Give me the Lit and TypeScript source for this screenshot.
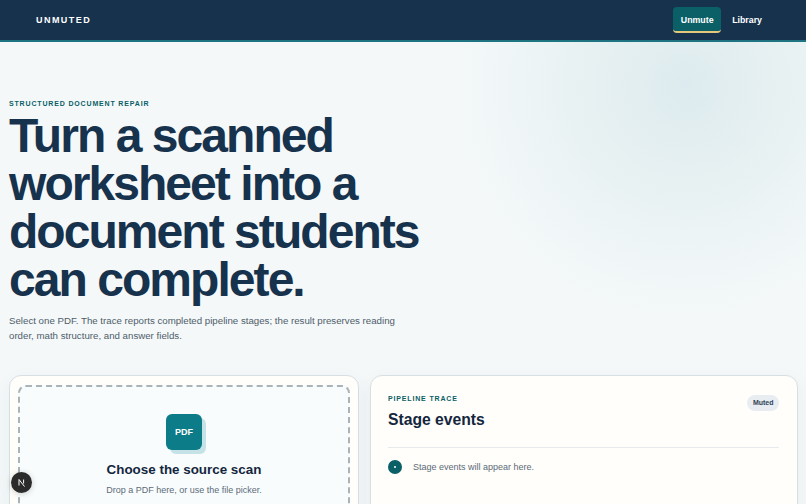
import { LitElement, html, css } from "lit";
import { customElement } from "lit/decorators.js";

@customElement("app-root")
export class AppRoot extends LitElement {
  static styles = css`
    :host {
      display: block;
      width: 806px;
      height: 504px;
      overflow: hidden;
      position: relative;
      font-family: "Liberation Sans", Arial, sans-serif;
      background: #f4f8f9;
    }
    .bar {
      height: 40px;
      background: #17324d;
      border-bottom: 2.5px solid #1f7482;
      display: flex;
      align-items: center;
      justify-content: space-between;
      padding: 0 33px 0 36px;
    }
    .brand {
      color: #fff;
      font-size: 9px;
      font-weight: 700;
      letter-spacing: 1.45px;
    }
    nav { display: flex; gap: 0; align-items: center; }
    .link {
      color: #fff;
      font-size: 8.8px;
      font-weight: 700;
      padding: 0 11px;
      height: 26px;
      line-height: 27px;
      box-sizing: border-box;
      border-radius: 4px;
    }
    .link.on {
      background: #0b5f67;
      border-bottom: 2px solid #e3c77b;
      width: 48px;
      padding: 0;
      text-align: center;
    }
    .main {
      height: 461.5px;
      box-sizing: border-box;
      padding: 57px 9px 0;
      background:
        radial-gradient(circle 235px at 685px 45px, #dcebef 0%, #e3eef0 22%, #e9f2f3 50%, #f0f6f7 78%, #f4f8f9 100%);
    }
    .eyebrow {
      color: #0b5f67;
      font-size: 7px;
      line-height: 10px;
      font-weight: 700;
      letter-spacing: 0.84px;
      text-transform: uppercase;
    }
    h1 {
      margin: 3px 0 0;
      color: #17324d;
      font-size: 48px;
      line-height: 48px;
      font-weight: 700;
      letter-spacing: -1.95px;
      width: 440px;
    }
    .lede {
      margin: 9px 0 0;
      color: #4f5d69;
      font-size: 9.7px;
      line-height: 15.4px;
      width: 400px;
    }
    .cards {
      display: grid;
      grid-template-columns: 350px 428px;
      gap: 11px;
      margin-top: 31px;
    }
    .card {
      background: #fffefa;
      border: 1px solid #d8dfe3;
      border-radius: 12px;
      height: 200px;
      box-sizing: border-box;
      box-shadow: 0 6px 20px rgba(23, 50, 77, 0.05);
    }
    .upload { padding: 9px 8px; }
    .drop {
      height: 190px;
      box-sizing: border-box;
      border: 2px dashed #a9b3ba;
      border-radius: 8px;
      background: #f8fcfd;
      display: flex;
      flex-direction: column;
      align-items: center;
      padding-top: 27px;
    }
    .pdf {
      width: 36px;
      height: 36px;
      border-radius: 6px;
      background: #0c7c88;
      color: #fff;
      font-size: 9px;
      font-weight: 700;
      display: flex;
      align-items: center;
      justify-content: center;
      box-shadow: 4px 4px 0 #c5e3e6;
    }
    .drop h2 {
      margin: 11.5px 0 0;
      color: #14263d;
      font-size: 13.4px;
      line-height: 18px;
      font-weight: 700;
    }
    .drop p {
      margin: 4px 0 0;
      color: #5d6b77;
      font-size: 9px;
      line-height: 14px;
    }
    .trace { padding: 18px 18px 0 17px; }
    .head { display: flex; justify-content: space-between; align-items: flex-start; }
    .head h2 {
      margin: 6px 0 0;
      color: #14263d;
      font-size: 15.7px;
      line-height: 20px;
      font-weight: 700;
    }
    .pill {
      background: #e8edf1;
      color: #2f4255;
      font-size: 7px;
      font-weight: 700;
      height: 16px;
      line-height: 16px;
      padding: 0 5.5px;
      margin-top: 1px;
      border-radius: 8px;
    }
    hr {
      border: 0;
      border-top: 1px solid #e6eaec;
      margin: 17px 0 0;
    }
    .event { display: flex; align-items: center; gap: 11px; margin-top: 12px; }
    .dot {
      width: 14px;
      height: 14px;
      border-radius: 50%;
      background: #0b5f67;
      display: flex;
      align-items: center;
      justify-content: center;
    }
    .dot i { width: 2px; height: 2px; border-radius: 50%; background: #fff; }
    .event span { color: #5d6b77; font-size: 9px; line-height: 14px; }
    .dev {
      position: absolute;
      left: 11px;
      top: 472px;
      width: 21px;
      height: 21px;
      border-radius: 50%;
      background: #2b2b2b;
      color: #fff;
      display: flex;
      align-items: center;
      justify-content: center;
      box-shadow: 0 1px 6px rgba(0, 0, 0, 0.2);
    }
  `;

  render() {
    return html`
      <header class="bar">
        <div class="brand">UNMUTED</div>
        <nav>
          <div class="link on">Unmute</div>
          <div class="link">Library</div>
        </nav>
      </header>
      <main class="main">
        <div class="eyebrow">Structured document repair</div>
        <h1>Turn a scanned worksheet into a document students can complete.</h1>
        <p class="lede">Select one PDF. The trace reports completed pipeline stages; the result preserves reading order, math structure, and answer fields.</p>
        <div class="cards">
          <section class="card upload">
            <div class="drop">
              <div class="pdf">PDF</div>
              <h2>Choose the source scan</h2>
              <p>Drop a PDF here, or use the file picker.</p>
            </div>
          </section>
          <section class="card trace">
            <div class="head">
              <div>
                <div class="eyebrow">Pipeline trace</div>
                <h2>Stage events</h2>
              </div>
              <div class="pill">Muted</div>
            </div>
            <hr />
            <div class="event"><div class="dot"><i></i></div><span>Stage events will appear here.</span></div>
          </section>
        </div>
      </main>
      <div class="dev">
        <svg width="11" height="11" viewBox="0 0 11 11" fill="none" stroke="#fff" stroke-width="1">
          <path d="M3 8.5V2.5L8.5 9.5M7.6 2.5V6.5" />
        </svg>
      </div>
    `;
  }
}
